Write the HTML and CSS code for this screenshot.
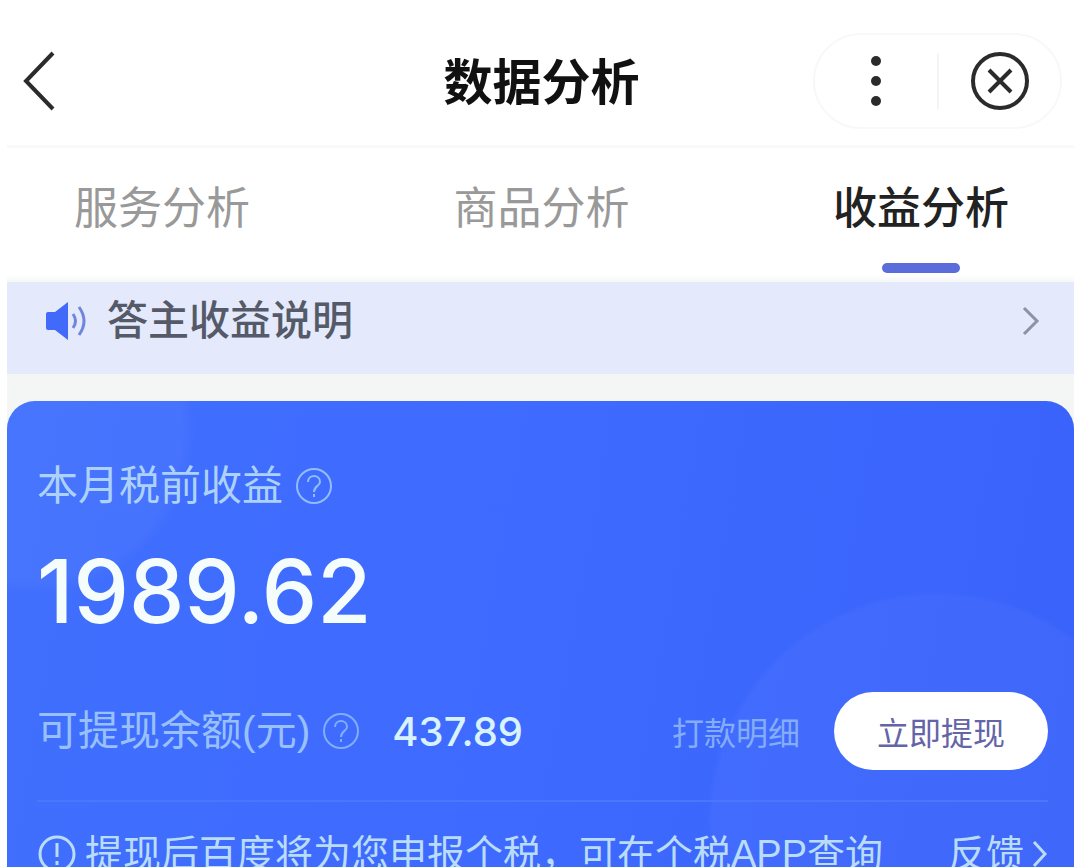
FILE: index.html
```html
<!DOCTYPE html>
<html lang="zh-CN">
<head>
  <meta charset="UTF-8">
  <meta name="viewport" content="width=device-width, initial-scale=1.0">
  <title>数据分析</title>
  <link rel="stylesheet" href="styles.css">
</head>
<body>

  <!-- Top bar -->
  <header class="header">
    <button class="icon-button back" aria-label="返回">
      <svg width="34" height="60" viewBox="0 0 34 60" fill="none" stroke="#2b2b2b" stroke-width="4">
        <path d="M32 2L5 30L32 58"/>
      </svg>
    </button>
    <h1>数据分析</h1>
    <div class="capsule">
      <button class="icon-button" aria-label="更多">
        <svg width="60" height="60" viewBox="0 0 60 60" fill="#2b2b2b">
          <circle cx="30" cy="10" r="5"/>
          <circle cx="30" cy="30" r="5"/>
          <circle cx="30" cy="50" r="5"/>
        </svg>
      </button>
      <span class="capsule-line"></span>
      <button class="icon-button" aria-label="关闭">
        <svg width="60" height="60" viewBox="0 0 60 60" fill="none" stroke="#2b2b2b" stroke-width="4">
          <circle cx="30" cy="30" r="27"/>
          <path d="M19 19L41 41M41 19L19 41"/>
        </svg>
      </button>
    </div>
  </header>

  <!-- Tabs -->
  <nav class="tabs">
    <a href="#service">服务分析</a>
    <a href="#goods">商品分析</a>
    <a href="#income" class="active">收益分析</a>
  </nav>

  <main class="content">
    <!-- Notice -->
    <a href="#notice" class="notice">
      <svg width="42" height="40" viewBox="0 0 42 40" fill="none">
        <path d="M3 11H10L23 1V39L10 29H3Q1 29 1 27V13Q1 11 3 11Z" fill="#4169fa"/>
        <path d="M28 13Q33 20 28 27M34 6Q44 20 34 34" stroke="#6f86dc" stroke-width="3"/>
      </svg>
      <span>答主收益说明</span>
      <svg class="arrow" width="18" height="30" viewBox="0 0 18 30" fill="none" stroke="#8e93a3" stroke-width="3">
        <path d="M2 2L15 15L2 28"/>
      </svg>
    </a>

    <!-- Income card -->
    <section class="card">
      <div class="label">
        <span>本月税前收益</span>
        <button class="icon-button" aria-label="收益说明">
          <svg width="38" height="38" viewBox="0 0 38 38" fill="none" stroke="#92bdfb" stroke-width="2">
            <circle cx="19" cy="19" r="17"/>
            <path d="M13 15C13 7 25 7 25 15C25 19 19 19 19 25M19 27V30"/>
          </svg>
        </button>
      </div>
      <div class="amount">1989.62</div>

      <div class="balance-row">
        <div class="label">
          <span>可提现余额(元)</span>
          <button class="icon-button" aria-label="余额说明">
            <svg width="38" height="38" viewBox="0 0 38 38" fill="none" stroke="#82adfb" stroke-width="2">
              <circle cx="19" cy="19" r="17"/>
              <path d="M13 15C13 7 25 7 25 15C25 19 19 19 19 25M19 27V30"/>
            </svg>
          </button>
        </div>
        <span class="balance">437.89</span>
        <a href="#detail" class="detail">打款明细</a>
        <button class="withdraw">立即提现</button>
      </div>

      <div class="tip">
        <svg width="40" height="40" viewBox="0 0 40 40" fill="none" stroke="#b9dcf8" stroke-width="3">
          <circle cx="20" cy="20" r="17"/>
          <path d="M20 9V23M20 27V31"/>
        </svg>
        <span>提现后百度将为您申报个税，可在个税APP查询</span>
        <a href="#feedback" class="feedback">
          反馈
          <svg width="16" height="28" viewBox="0 0 16 28" fill="none" stroke="#b9dcf8" stroke-width="3">
            <path d="M2 2L13 14L2 26"/>
          </svg>
        </a>
      </div>
    </section>
  </main>

</body>
</html>
```
FILE: styles.css
```css
* {
  box-sizing: border-box;
}
body {
  height: 100vh;
  margin: 0;
  padding: 0 3px 0 7px;
  overflow: hidden;
  background-color: #fff;
  font-family: "Liberation Sans", "Noto Sans CJK SC", sans-serif;
}
a {
  color: inherit;
  text-decoration: none;
}
svg {
  display: block;
  flex: none;
}
.icon-button {
  padding: 0;
  border: none;
  background: none;
  cursor: pointer;
}

/* Top bar */
.header {
  display: grid;
  grid-template-columns: 1fr auto 1fr;
  align-items: center;
  height: 148px;
  padding: 16px 12px 0 14px;
  border-bottom: 3px solid #f9f9f9;
}
.back {
  justify-self: start;
}
h1 {
  margin: 0;
  padding-top: 4px;
  font-size: 49px;
  line-height: 60px;
  font-weight: 700;
  color: #111;
}
.capsule {
  justify-self: end;
  display: flex;
  align-items: center;
  gap: 31px;
  height: 96px;
  padding: 0 30px 0 31px;
  border: 2px solid #f8f8f8;
  border-radius: 48px;
}
.capsule-line {
  width: 2px;
  height: 56px;
  background-color: #f4f4f4;
}

/* Tabs */
.tabs {
  display: flex;
  justify-content: space-between;
  height: 127px;
  padding: 29px 65px 0 67px;
  font-size: 44px;
  line-height: 64px;
  color: #999;
}
.tabs .active {
  font-weight: 500;
  color: #222;
}
.tabs .active::after {
  content: "";
  display: block;
  width: 78px;
  height: 10px;
  margin: 22px auto 0;
  border-radius: 5px;
  background-color: #5b6ddb;
}

.content {
  background: linear-gradient(#fff, #f4f5f5 8px);
  padding-top: 7px;
}

/* Notice */
.notice {
  display: flex;
  align-items: center;
  height: 92px;
  padding: 0 34px 14px 38px;
  background-color: #e5e9fc;
  font-size: 41px;
  font-weight: 500;
  line-height: 60px;
  color: #555a68;
}
.notice span {
  margin-left: 20px;
}
.notice .arrow {
  margin-left: auto;
}

/* Income card */
.card {
  margin-top: 27px;
  padding: 55px 26px 0 30px;
  border-radius: 28px 28px 0 0;
  color: #fff;
  background:
    radial-gradient(circle at 24px 30px, rgba(255, 255, 255, 0.04) 150px, transparent 164px),
    radial-gradient(circle at 930px 420px, rgba(255, 255, 255, 0.03) 224px, transparent 230px),
    linear-gradient(100deg, #406ffd, #3e6aff 50%, #3962fa);
}
.label {
  display: flex;
  align-items: center;
  gap: 12px;
  font-size: 41px;
  line-height: 60px;
  color: #acd2fa;
}
.amount {
  margin-top: 20px;
  font-family: Inter, sans-serif;
  font-size: 88px;
  font-weight: 500;
  line-height: 110px;
  color: #f4fcfc;
}
.balance-row {
  display: flex;
  align-items: center;
  height: 110px;
  margin-top: 30px;
}
.balance-row .label {
  color: #98c0fb;
}
.balance {
  margin-left: 32px;
  font-family: Inter, sans-serif;
  font-size: 40px;
  font-weight: 500;
  color: #d8f3fb;
}
.detail {
  margin-left: auto;
  font-size: 32px;
  color: #84adf8;
}
.withdraw {
  width: 214px;
  height: 78px;
  margin-left: 34px;
  border: none;
  border-radius: 39px;
  background-color: #fff;
  font-family: inherit;
  font-size: 32px;
  color: #6464a8;
  cursor: pointer;
}
.tip {
  display: flex;
  align-items: center;
  margin-top: 14px;
  padding-top: 22px;
  border-top: 2px solid #4a77fd;
  font-size: 38px;
  line-height: 60px;
  white-space: nowrap;
  color: #b9dcf8;
}
.tip > span {
  margin-left: 8px;
}
.feedback {
  display: flex;
  align-items: center;
  gap: 8px;
  margin-left: auto;
}
```
